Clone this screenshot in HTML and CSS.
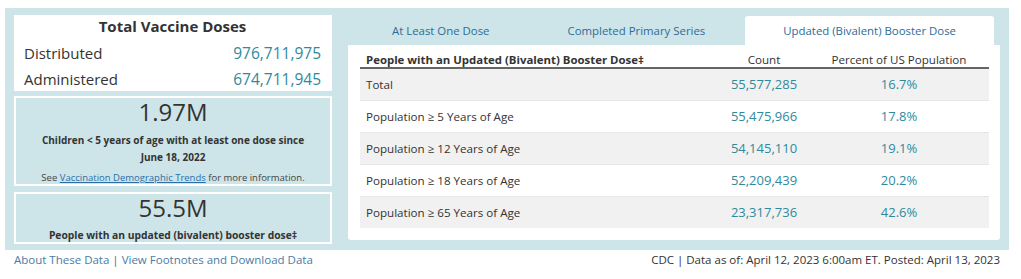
FILE: index.html
```html
<!DOCTYPE html>
<html lang="en">
<head>
<meta charset="utf-8">
<title>Vaccine Doses</title>
<link rel="stylesheet" href="styles.css">
</head>
<body>
<div class="dash">
  <div class="left">
    <div class="totals">
      <div class="totals-title">Total Vaccine Doses</div>
      <div class="totals-row"><span>Distributed</span><span class="num">976,711,975</span></div>
      <div class="totals-row"><span>Administered</span><span class="num">674,711,945</span></div>
    </div>
    <div class="stat stat-kids">
      <div class="stat-big">1.97M</div>
      <div class="stat-label">Children &lt; 5 years of age with at least one dose since June 18, 2022</div>
      <div class="stat-note">See <a href="#">Vaccination Demographic Trends</a> for more information.</div>
    </div>
    <div class="stat stat-boost">
      <div class="stat-big">55.5M</div>
      <div class="stat-label">People with an updated (bivalent) booster dose&Dagger;</div>
    </div>
  </div>
  <div class="right">
    <div class="tabs">
      <div class="tab">At Least One Dose</div>
      <div class="tab">Completed Primary Series</div>
      <div class="tab tab-active">Updated (Bivalent) Booster Dose</div>
    </div>
    <div class="panel">
      <table class="data">
        <thead>
          <tr><th class="c-label">People with an Updated (Bivalent) Booster Dose&Dagger;</th><th class="c-count">Count</th><th class="c-pct">Percent of US Population</th></tr>
        </thead>
        <tbody>
          <tr><td class="c-label">Total</td><td class="c-count">55,577,285</td><td class="c-pct">16.7%</td></tr>
          <tr><td class="c-label">Population &ge; 5 Years of Age</td><td class="c-count">55,475,966</td><td class="c-pct">17.8%</td></tr>
          <tr><td class="c-label">Population &ge; 12 Years of Age</td><td class="c-count">54,145,110</td><td class="c-pct">19.1%</td></tr>
          <tr><td class="c-label">Population &ge; 18 Years of Age</td><td class="c-count">52,209,439</td><td class="c-pct">20.2%</td></tr>
          <tr><td class="c-label">Population &ge; 65 Years of Age</td><td class="c-count">23,317,736</td><td class="c-pct">42.6%</td></tr>
        </tbody>
      </table>
    </div>
  </div>
</div>
<div class="footer">
  <div class="foot-links"><a href="#">About These Data</a> | <a href="#">View Footnotes and Download Data</a></div>
  <div class="foot-meta">CDC | Data as of: April 12, 2023 6:00am ET. Posted: April 13, 2023</div>
</div>
</body>
</html>
```

FILE: styles.css
```css
* { box-sizing: border-box; }
body {
  margin: 0;
  padding: 8px 12px 0 5px;
  font-family: "Open Sans", "Liberation Sans", sans-serif;
  color: #333;
  background: #fff;
}
.dash {
  display: flex;
  gap: 16px;
  background: #cde4e8;
  padding: 7px 9px 6px 9px;
  height: 242px;
}
.left {
  width: 318px;
  flex-shrink: 0;
  display: flex;
  flex-direction: column;
}
.totals {
  background: #fff;
  height: 76px;
  padding: 1px 11px 0 10px;
}
.totals-title {
  font-weight: 700;
  font-size: 15px;
  text-align: center;
  line-height: 20px;
  margin-bottom: 4px;
}
.totals-row {
  display: flex;
  justify-content: space-between;
  font-size: 15px;
  line-height: 26px;
}
.totals-row .num {
  color: #2f8a9d;
  font-size: 15.5px;
}
.stat {
  border: 2px solid #fff;
  text-align: center;
}
.stat-kids {
  margin-top: 5px;
  height: 90px;
}
.stat-boost {
  margin-top: 6px;
  height: 52px;
}
.stat-big {
  font-size: 24px;
  line-height: 28px;
  color: #333;
}
.stat-label {
  font-weight: 700;
  font-size: 10.3px;
  line-height: 17px;
  padding: 5px 6px 0;
}
.stat-kids .stat-label {
  font-size: 10px;
  padding: 6px 20px 0;
}
.stat-note {
  font-size: 9.5px;
  line-height: 14px;
  margin-top: 5px;
  color: #444;
}
.stat-note a { color: #2a6fa8; }
.right {
  flex: 1;
  min-width: 0;
  display: flex;
  flex-direction: column;
}
.tabs {
  display: flex;
  gap: 2px;
  padding-left: 6px;
  margin-top: 1px;
  height: 29px;
}
.tab {
  padding: 0 38px;
  font-size: 11.4px;
  line-height: 29px;
  color: #2d6c97;
  white-space: nowrap;
}
.tab-active {
  background: #fff;
  border-radius: 3px 3px 0 0;
}
.panel {
  background: #fff;
  border-radius: 0 0 3px 3px;
  padding: 0 11px 12px 12px;
  height: 195px;
}
.data {
  width: 100%;
  border-collapse: collapse;
  font-size: 11.6px;
}
.data th {
  font-weight: 400;
  height: 23px;
  padding: 6px 0 0;
  border-bottom: 2px solid #666;
  vertical-align: middle;
  white-space: nowrap;
}
.data th.c-label {
  font-weight: 700;
  font-size: 11.4px;
  text-align: left;
  padding-left: 6px;
}
.data td {
  height: 32px;
  border-top: 1px solid #e6e6e6;
  padding: 0;
}
.data tbody tr:nth-child(odd) { background: #f1f1f1; }
.data td.c-label { padding-left: 6px; }
.c-count { text-align: center; width: 90px; }
.c-pct { text-align: center; width: 180px; }
.data td.c-count, .data td.c-pct { color: #2f8a9d; font-size: 13px; }
.footer {
  display: flex;
  justify-content: space-between;
  padding: 1px 9px 0 9px;
  font-size: 11.5px;
  line-height: 17px;
}
.foot-links { color: #2f6f99; }
.foot-links a { color: #4a7ba6; text-decoration: none; }
.foot-meta { color: #333; }
```
